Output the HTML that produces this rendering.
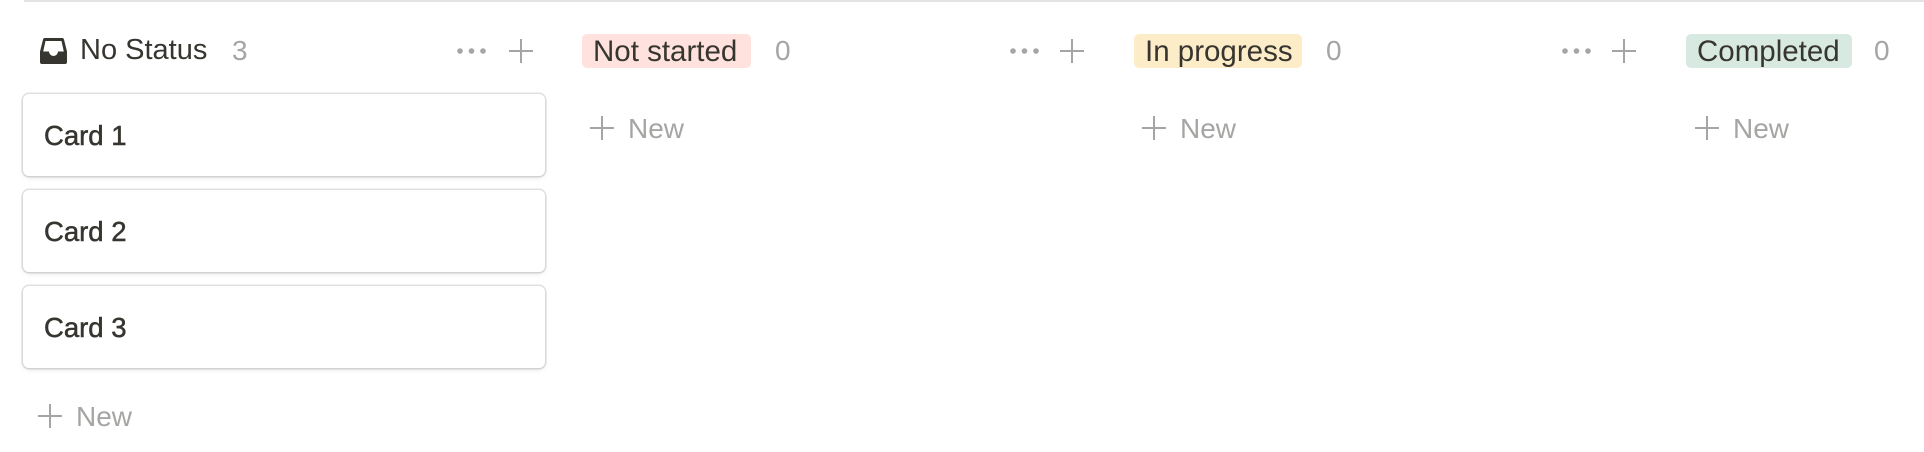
<!DOCTYPE html>
<html><head><meta charset="utf-8"><style>
*{margin:0;padding:0;box-sizing:border-box}
body{width:1924px;height:452px;background:#fff;font-family:"Liberation Sans",sans-serif;color:#37352f;position:relative;overflow:hidden}
.topline{position:absolute;left:24px;right:0;top:0;height:2px;background:#e3e3e1}
.a{position:absolute;white-space:nowrap;line-height:1}
.h{font-size:29px;top:36px}
.cnt{font-size:28px;color:#a5a5a3;top:37px}
.pill{position:absolute;top:34px;height:34px;border-radius:5px;font-size:29.5px;line-height:35px;padding-left:11px}
.card{position:absolute;left:23px;width:522px;height:82px;border-radius:6px;background:#fff;box-shadow:0 0 0 1.5px rgba(15,15,15,.12),0 2px 4px rgba(15,15,15,.1)}
.card span{position:absolute;left:21px;top:26px;font-size:27.5px;-webkit-text-stroke:.5px #37352f}
.new{font-size:28px;color:#a5a5a3}
svg{position:absolute}
</style></head><body>
<div class="topline"></div>

<svg style="left:40px;top:37px" width="27" height="27" viewBox="0 0 27 27"><path d="M5 1h17a2 2 0 0 1 2 1.5l3 12V25a2 2 0 0 1-2 2H2a2 2 0 0 1-2-2V14.5l3-12A2 2 0 0 1 5 1z" fill="#37352f"/><path d="M5.5 4h16l2.3 10.5H18a4.5 4.5 0 0 1-9 0H3.2z" fill="#fff"/></svg>
<div class="a h" style="left:80px">No Status</div>
<div class="a cnt" style="left:232px">3</div>

<svg style="left:456px;top:46px" width="32" height="10"><circle cx="4" cy="5" r="2.8" fill="#a5a5a3"/><circle cx="15.5" cy="5" r="2.8" fill="#a5a5a3"/><circle cx="27" cy="5" r="2.8" fill="#a5a5a3"/></svg>
<svg style="left:508px;top:38px" width="26" height="26"><path d="M13 1v24M1 13h24" stroke="#a5a5a3" stroke-width="2"/></svg>

<div class="card" style="top:94px"><span>Card 1</span></div>
<div class="card" style="top:190px"><span>Card 2</span></div>
<div class="card" style="top:286px"><span>Card 3</span></div>

<svg style="left:38px;top:404px" width="24" height="24"><path d="M12 0v24M0 12h24" stroke="#a5a5a3" stroke-width="2"/></svg>
<div class="a new" style="left:76px;top:403px">New</div>

<div class="pill" style="left:582px;width:169px;background:#ffe2dd">Not started</div>
<div class="a cnt" style="left:775px">0</div>
<svg style="left:1009px;top:46px" width="32" height="10"><circle cx="4" cy="5" r="2.8" fill="#a5a5a3"/><circle cx="15.5" cy="5" r="2.8" fill="#a5a5a3"/><circle cx="27" cy="5" r="2.8" fill="#a5a5a3"/></svg>
<svg style="left:1059px;top:38px" width="26" height="26"><path d="M13 1v24M1 13h24" stroke="#a5a5a3" stroke-width="2"/></svg>
<svg style="left:590px;top:116px" width="24" height="24"><path d="M12 0v24M0 12h24" stroke="#a5a5a3" stroke-width="2"/></svg>
<div class="a new" style="left:628px;top:115px">New</div>

<div class="pill" style="left:1134px;width:168px;background:#fdecc8">In progress</div>
<div class="a cnt" style="left:1326px">0</div>
<svg style="left:1561px;top:46px" width="32" height="10"><circle cx="4" cy="5" r="2.8" fill="#a5a5a3"/><circle cx="15.5" cy="5" r="2.8" fill="#a5a5a3"/><circle cx="27" cy="5" r="2.8" fill="#a5a5a3"/></svg>
<svg style="left:1611px;top:38px" width="26" height="26"><path d="M13 1v24M1 13h24" stroke="#a5a5a3" stroke-width="2"/></svg>
<svg style="left:1142px;top:116px" width="24" height="24"><path d="M12 0v24M0 12h24" stroke="#a5a5a3" stroke-width="2"/></svg>
<div class="a new" style="left:1180px;top:115px">New</div>

<div class="pill" style="left:1686px;width:166px;background:#d8e9e1">Completed</div>
<div class="a cnt" style="left:1874px">0</div>
<svg style="left:1695px;top:116px" width="24" height="24"><path d="M12 0v24M0 12h24" stroke="#a5a5a3" stroke-width="2"/></svg>
<div class="a new" style="left:1733px;top:115px">New</div>
</body></html>
